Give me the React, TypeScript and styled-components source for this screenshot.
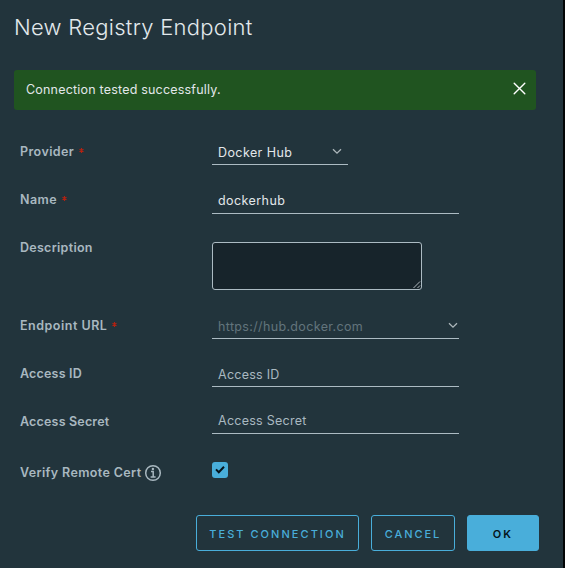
import React from "react";
import styled, { createGlobalStyle } from "styled-components";

const Global = createGlobalStyle`
  *, *::before, *::after { box-sizing: border-box; }
  body { margin: 0; background: #030506; font-family: Inter, "Open Sans", sans-serif; }
`;

const Dialog = styled.main`
  width: 563px;
  height: 568px;
  padding: 15px 24px 0 14px;
  display: flex;
  flex-direction: column;
  background: #22343c;
  color: #e2e7ea;
  font-size: 12.5px;
`;

const Title = styled.h1`
  margin: 0;
  height: 55px;
  font-size: 22px;
  font-weight: 300;
  line-height: 24px;
  letter-spacing: 0.28px;
  color: #e2e9ec;
`;

const Alert = styled.div`
  width: 522px;
  height: 40px;
  padding: 0 10px 2px 12px;
  display: flex;
  align-items: center;
  justify-content: space-between;
  border-radius: 3px;
  background: #205420;
  letter-spacing: 0.2px;
`;

const AlertText = styled.span`
  line-height: 16px;
  padding-top: 1px;
`;

const CloseButton = styled.button`
  display: flex;
  padding: 0;
  margin-top: -1px;
  border: 0;
  background: none;
  color: #fff;
`;

const Form = styled.div`
  padding: 32px 0 0 6px;
`;

const Row = styled.div<{ $height?: number }>`
  height: ${(p) => p.$height ?? 48}px;
  display: grid;
  grid-template-columns: 192px 1fr;
  align-items: start;
`;

const Label = styled.label<{ $track?: number; $drop?: number }>`
  display: flex;
  align-items: center;
  height: 20px;
  margin-top: ${(p) => p.$drop ?? 0}px;
  line-height: 20px;
  font-weight: 600;
  letter-spacing: ${(p) => p.$track ?? 0}px;
  color: #a9b8c0;
`;

const Required = styled.svg`
  margin: 0 0 3px 5px;
`;

const InfoIcon = styled.svg`
  margin: 0 0 1px 3px;
`;

const Control = styled.div<{ $width?: number; $height?: number; $line?: number; $tone?: string; $track?: number }>`
  width: ${(p) => p.$width ?? 247}px;
  height: ${(p) => p.$height ?? 23}px;
  padding: 0 1px 0 6px;
  display: flex;
  justify-content: space-between;
  border-bottom: 1px solid #acbbc3;
  line-height: ${(p) => p.$line ?? 21}px;
  letter-spacing: ${(p) => p.$track ?? 0}px;
  color: ${(p) => p.$tone ?? "#e2e7ea"};
`;

const ChevronIcon = styled.svg<{ $inset?: number }>`
  margin: 6px ${(p) => p.$inset ?? 0}px 0 0;
`;

const TextArea = styled.div`
  width: 210px;
  height: 48px;
  margin-top: 4px;
  display: flex;
  align-items: flex-end;
  justify-content: flex-end;
  border: 1px solid #acbbc3;
  border-radius: 3px;
  background: #17242b;
`;

const Checkbox = styled.div`
  width: 16px;
  height: 16px;
  display: grid;
  place-items: center;
  border-radius: 3px;
  background: #49aeda;
`;

const Footer = styled.footer`
  display: flex;
  justify-content: flex-end;
  gap: 12px;
  padding-top: 5px;
`;

const Button = styled.button<{ $width: number; $primary?: boolean; $track?: number }>`
  width: ${(p) => p.$width}px;
  height: 36px;
  padding: 2px 0 0 0;
  border: 1px solid #49aeda;
  border-radius: 3px;
  background: ${(p) => (p.$primary ? "#49aeda" : "transparent")};
  color: ${(p) => (p.$primary ? "#05141b" : "#49aeda")};
  font: ${(p) => (p.$primary ? 600 : 500)} 11px/14px Inter, sans-serif;
  letter-spacing: ${(p) => p.$track ?? 2.05}px;
  white-space: nowrap;
`;

const Star = () => (
  <Required width="5" height="5" viewBox="0 0 5 5" stroke="#b32212" strokeWidth="1.1">
    <path d="M2.5 0v5M.5 1.2l4 2.6M4.5 1.2l-4 2.6" />
  </Required>
);

const Chevron = ({ inset }: { inset?: number }) => (
  <ChevronIcon $inset={inset} width="10" height="7" viewBox="0 0 10 7" fill="none" stroke="#adb7bb" strokeWidth="1.3">
    <path d="M1 1.2l4 4 4-4" />
  </ChevronIcon>
);

export default function App() {
  return (
    <>
      <Global />
      <Dialog>
        <Title>New Registry Endpoint</Title>
        <Alert>
          <AlertText>Connection tested successfully.</AlertText>
          <CloseButton aria-label="Close">
            <svg width="13" height="13" viewBox="0 0 13 13" fill="none" stroke="currentColor" strokeWidth="1.4" strokeLinecap="round">
              <path d="M1.2 1.2l10.6 10.6M11.8 1.2L1.2 11.8" />
            </svg>
          </CloseButton>
        </Alert>
        <Form>
          <Row>
            <Label $track={0.42}>Provider<Star /></Label>
            <Control $width={136} $track={0.42}>Docker Hub<Chevron inset={5} /></Control>
          </Row>
          <Row>
            <Label $track={0.45}>Name<Star /></Label>
            <Control $height={24} $track={0.42}>dockerhub</Control>
          </Row>
          <Row $height={78}>
            <Label $track={0.28}>Description</Label>
            <TextArea>
              <svg width="9" height="9" viewBox="0 0 9 9" stroke="#c3cbd0" strokeWidth="0.9">
                <path d="M1.5 8L8 1.5M5.5 8L8 5.5" />
              </svg>
            </TextArea>
          </Row>
          <Row>
            <Label $track={0.51}>Endpoint URL<Star /></Label>
            <Control $tone="#62747c" $track={0.35}>https://hub.docker.com<Chevron /></Control>
          </Row>
          <Row>
            <Label $track={0.18}>Access ID</Label>
            <Control $tone="#a9b8c0" $track={0.26}>Access ID</Control>
          </Row>
          <Row $height={50}>
            <Label $track={0.18}>Access Secret</Label>
            <Control $height={22} $line={18} $tone="#a9b8c0" $track={0.26}>Access Secret</Control>
          </Row>
          <Row>
            <Label $drop={1} $track={0.37}>
              Verify Remote Cert
              <InfoIcon width="18" height="18" viewBox="0 0 18 18" fill="none" stroke="#a9b8c0" strokeWidth="1.5">
                <circle cx="9" cy="9" r="7.3" />
                <path d="M7 7.6h2.2v5.2M6.6 12.9h5" />
                <circle cx="8.9" cy="5" r="1.2" fill="#a9b8c0" stroke="none" />
              </InfoIcon>
            </Label>
            <Checkbox role="checkbox" aria-checked="true">
              <svg width="10" height="10" viewBox="0 0 10 10" fill="none" stroke="#06131a" strokeWidth="2">
                <path d="M1 4.4l2.8 2.8L9 1.8" />
              </svg>
            </Checkbox>
          </Row>
        </Form>
        <Footer>
          <Button $width={163}>TEST CONNECTION</Button>
          <Button $width={84} $track={1.95}>CANCEL</Button>
          <Button $width={72} $primary>OK</Button>
        </Footer>
      </Dialog>
    </>
  );
}
